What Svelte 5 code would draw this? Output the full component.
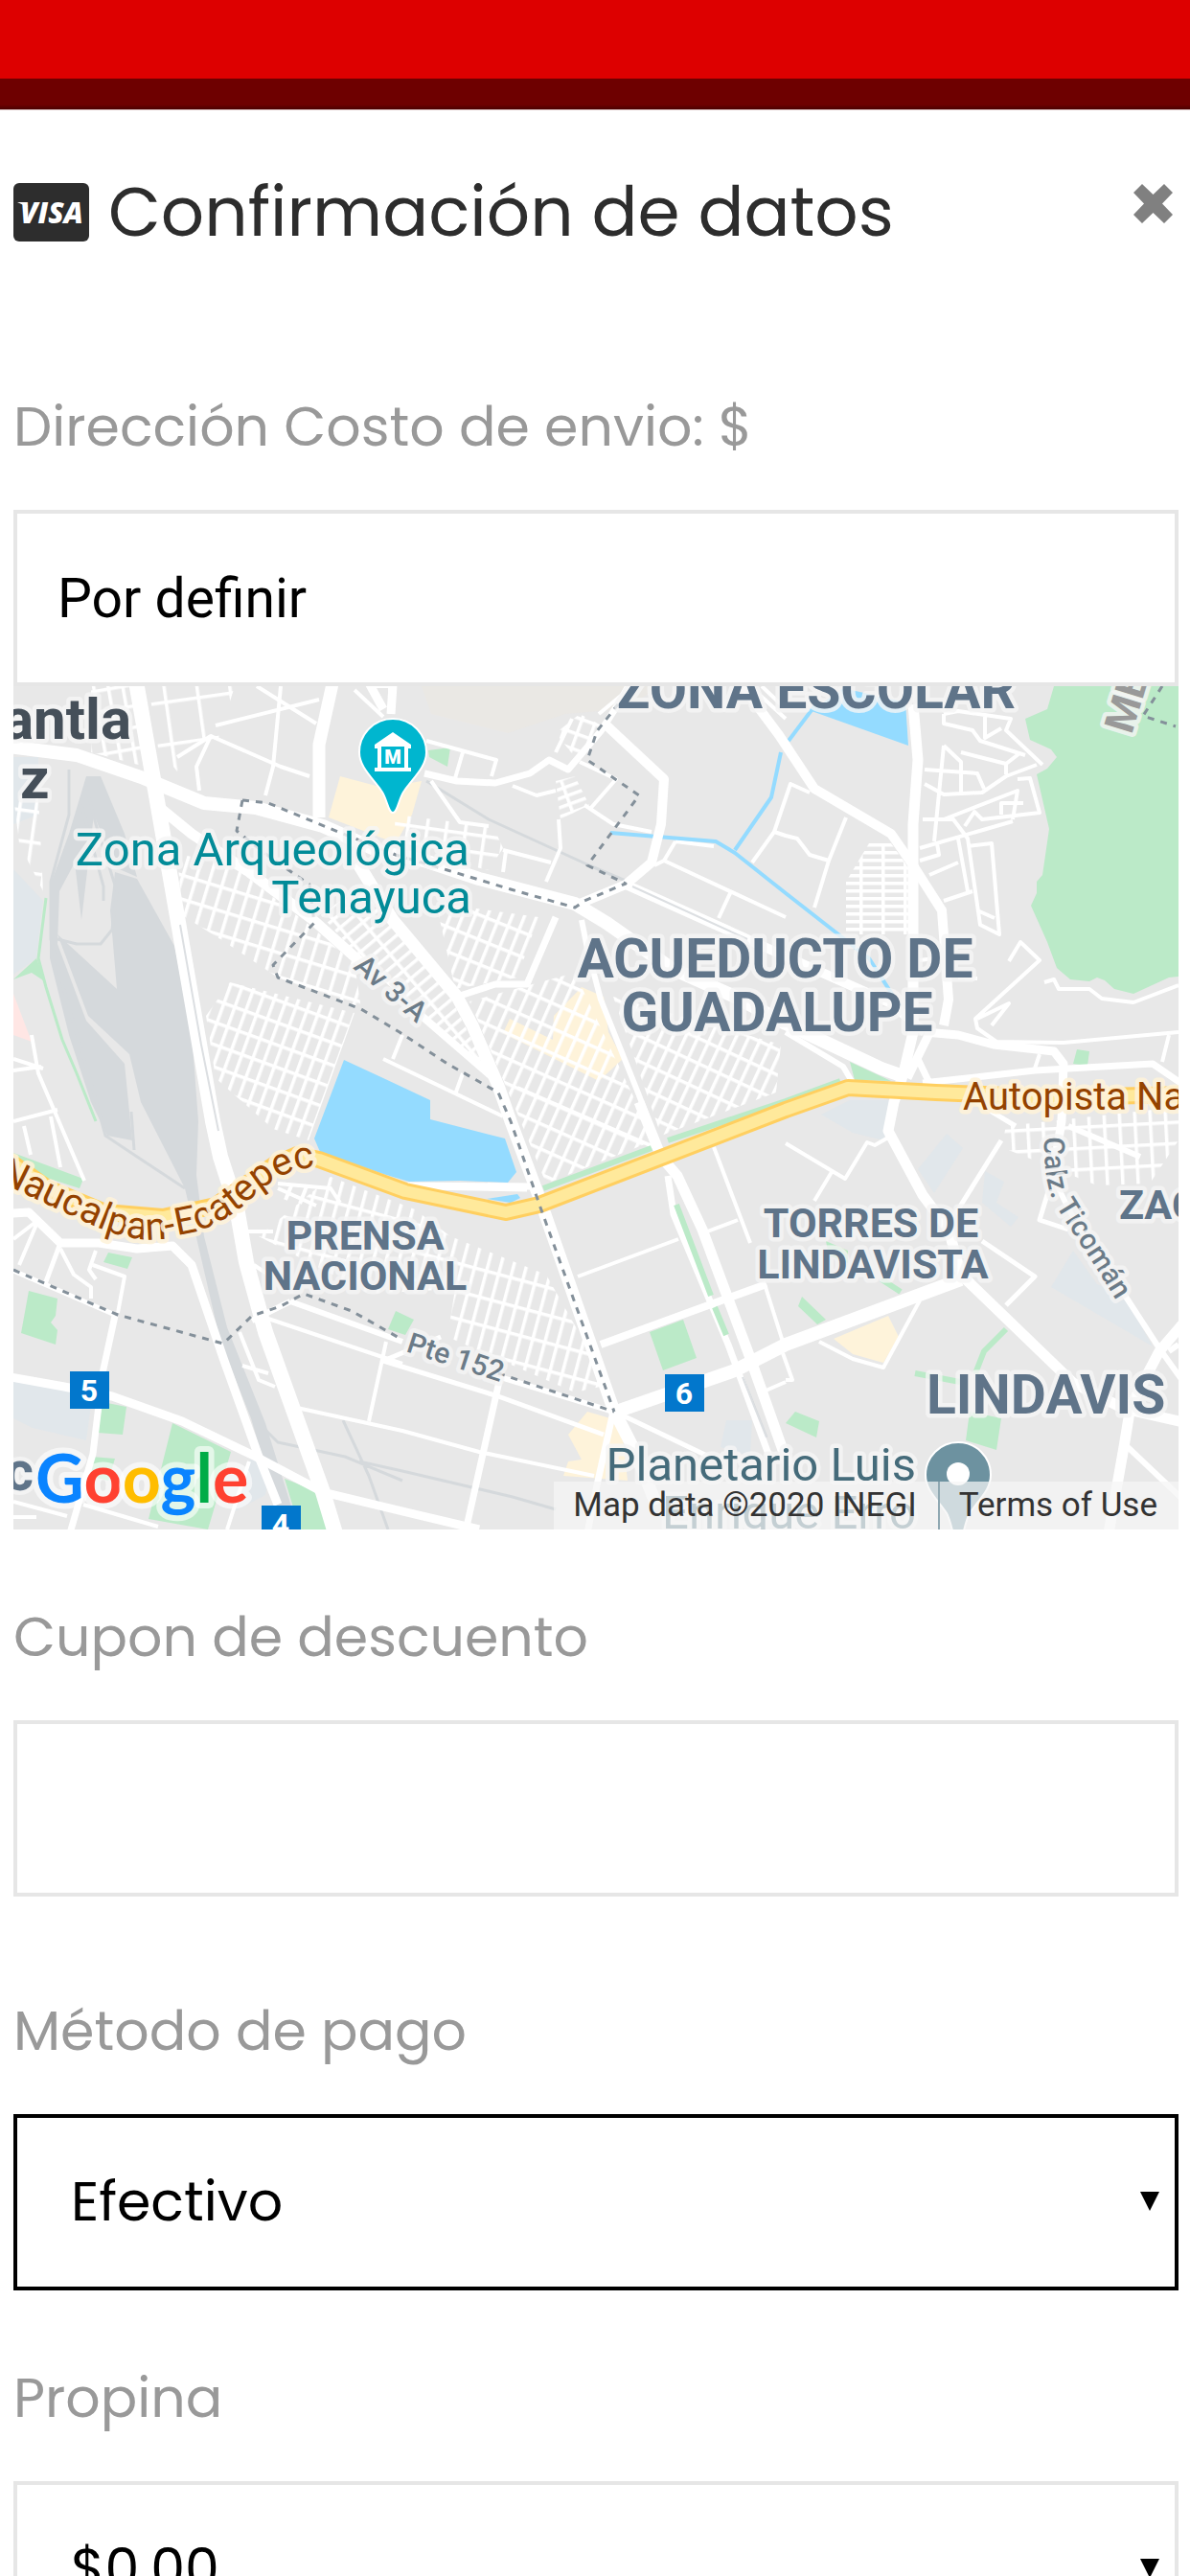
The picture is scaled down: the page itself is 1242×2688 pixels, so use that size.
<script lang="ts">
	let address = $state('Por definir');
	let coupon = $state('');
	let payment = $state('Efectivo');
	let tip = $state('$0.00');

	const payments = ['Efectivo', 'Tarjeta'];
	const tips = ['$0.00', '$10.00', '$20.00', '$50.00'];

	type Area = { fill: string; points: string };
	type Line = { w: number; points: string };

	const areas: Area[] = [
		// industrial
		{ fill: '#e1e7eb', points: '14,907 45,940 38,1000 14,1017' },
		{ fill: '#e1e7eb', points: '14,790 40,790 40,850 14,860' },
		{ fill: '#e1e7eb', points: '14,1440 97,1453 90,1503 34,1490 14,1480' },
		{ fill: '#e1e7eb', points: '857,1163 887,1148 937,1148 922,1190 890,1182' },
		{ fill: '#e1e7eb', points: '1120,1305 1145,1340 1173,1352 1203,1405 1097,1343' },
		{ fill: '#e1e7eb', points: '958,1220 988,1183 1005,1198 975,1245' },
		{ fill: '#e1e7eb', points: '1028,1222 1048,1233 1040,1255 1063,1270 1055,1280 1025,1255' },
		{ fill: '#e1e7eb', points: '758,1482 785,1482 783,1520 752,1510' },
		{ fill: '#e1e7eb', points: '262,1520 283,1530 277,1560 245,1577' },
		{ fill: '#ffe6e4', points: '14,1037 33,1087 14,1080' },
		// rail yards
		{ fill: '#d5d9dc', points: '120,910 143,917 182,987 200,1077 207,1170 205,1226 213,1290 237,1385 277,1485 305,1575 290,1575 262,1480 230,1400 207,1300 193,1240 147,1150 135,1100 92,1060 60,975 122,1032 115,950' },
		{ fill: '#d5d9dc', points: '52,925 72,870 90,810 105,810 130,870 143,915 120,905 98,850 85,960 78,900 62,930 60,985 90,1065 130,1110 138,1190 112,1185 95,1150 72,1080 52,1000' },
		// parks
		{ fill: '#bbeac8', points: '1100,716 1093,740 1070,750 1075,772 1097,782 1103,790 1093,802 1082,808 1095,865 1088,913 1082,920 1082,932 1076,945 1093,983 1103,1010 1117,1022 1137,1024 1145,1020 1153,1023 1163,1032 1183,1037 1220,1020 1230,1019 1230,716' },
		{ fill: '#bbeac8', points: '30,1347 60,1355 58,1373 53,1380 60,1388 58,1403 22,1391' },
		{ fill: '#bbeac8', points: '180,1485 241,1515 217,1596 155,1585' },
		{ fill: '#bbeac8', points: '297,1543 333,1557 342,1596 313,1596' },
		{ fill: '#bbeac8', points: '107,1463 132,1468 128,1497 102,1495' },
		{ fill: '#bbeac8', points: '95,1520 120,1522 113,1545 93,1540' },
		{ fill: '#bbeac8', points: '14,1203 87,1230 83,1240 14,1218' },
		{ fill: '#bbeac8', points: '113,1307 138,1312 133,1324 108,1317' },
		{ fill: '#bbeac8', points: '678,1390 713,1377 727,1417 692,1430' },
		{ fill: '#bbeac8', points: '413,1368 432,1377 423,1393 405,1387' },
		{ fill: '#bbeac8', points: '1012,1473 1045,1480 1040,1513 1008,1503' },
		{ fill: '#bbeac8', points: '837,1353 862,1377 853,1382 833,1363' },
		{ fill: '#bbeac8', points: '830,1473 855,1483 852,1500 820,1485' },
		{ fill: '#bbeac8', points: '862,1295 885,1305 885,1318 865,1310' },
		{ fill: '#bbeac8', points: '887,1108 930,1128 892,1127' },
		{ fill: '#bbeac8', points: '1120,1110 1124,1095 1137,1097 1135,1112' },
		{ fill: '#bbeac8', points: '447,783 470,780 467,800 448,790' },
		{ fill: '#bbeac8', points: '14,1022 38,1000 48,1025 33,1015' },
		// shopping areas
		{ fill: '#fef3da', points: '355,810 400,822 440,815 430,850 413,880 343,853' },
		{ fill: '#fef3da', points: '607,1030 630,1040 635,1077 650,1105 625,1128 525,1078 532,1063 577,1085 578,1060' },
		{ fill: '#fef3da', points: '870,1397 927,1373 938,1395 922,1422 890,1413' },
		{ fill: '#fef3da', points: '613,1473 637,1480 650,1500 655,1545 588,1540 593,1525 607,1523 593,1497' },
		// water
		{ fill: '#94dbff', points: '359,1106 400,1125 449,1148 449,1168 527,1188 539,1223 530,1234 480,1232 427,1233 400,1225 334,1202 328,1188' },
		{ fill: '#94dbff', points: '508,1251 540,1246 543,1250 533,1255' },
		{ fill: '#94dbff', points: '847,742 880,718 945,733 948,778' }
	];

	// blocks of small streets: angle and spacing of the grid inside each outline
	const blocks = [
		{ angle: -10, w: 15, h: 22, points: '95,716 137,716 152,800 95,785' },
		{ angle: -8, w: 34, h: 44, points: '155,716 245,716 228,770 200,775 185,805 165,780' },
		{ angle: 8, w: 17, h: 32, points: '14,830 40,830 45,930 20,880' },
		{ angle: 17, w: 14, h: 24, points: '185,890 247,907 320,963 370,1005 377,1053 290,1020 230,980 190,955' },
		{ angle: 20, w: 12, h: 22, points: '240,1025 370,1057 322,1190 285,1178 225,1125 215,1060' },
		{ angle: -40, w: 22, h: 11, points: '335,955 375,925 470,1040 510,1120 385,1010' },
		{ angle: 22, w: 12, h: 24, points: '455,942 562,957 540,1020 475,1032' },
		{ angle: 8, w: 20, h: 18, points: '413,850 515,863 525,885 510,908 410,885' },
		{ angle: 24, w: 13, h: 24, points: '490,1045 600,1015 640,1100 683,1190 570,1235 535,1150' },
		{ angle: 25, w: 12, h: 24, points: '640,1040 815,1090 810,1140 690,1185' },
		{ angle: 15, w: 13, h: 28, points: '345,1228 433,1262 470,1290 570,1330 635,1445 600,1453 467,1395 475,1345 385,1350 270,1290' },
		{ angle: 0, w: 23, h: 8, points: '883,920 907,880 930,880 950,908 950,975 883,975' },
		{ angle: -3, w: 16, h: 22, points: '1050,1175 1230,1155 1230,1190 1200,1235 1145,1237 1045,1197' },
		{ angle: 20, w: 14, h: 16, points: '580,765 605,745 628,757 600,790' },
		{ angle: -20, w: 30, h: 9, points: '580,815 600,810 615,840 585,855' }
	];

	const streets: Line[] = [
		{ w: 4, points: '14,1170 60,1158 M25,1175 32,1205 M53,1165 63,1218' },
		{ w: 4, points: '14,1105 45,1115 M14,1117 43,1113 M33,1080 40,1120 88,1232' },
		{ w: 4, points: '220,768 293,800 323,810 M293,716 285,800 277,830 M225,757 333,730' },
		{ w: 4, points: '185,790 220,768 205,800 208,825 M268,716 330,755' },
		{ w: 4, points: '390,716 407,716 407,745 M370,720 400,748' },
		{ w: 4, points: '445,773 518,793 513,810 M483,785 475,812 M450,815 480,858 510,862' },
		{ w: 4, points: '583,855 585,885 570,920 M535,820 560,830 580,825 M610,840 640,860 680,868' },
		{ w: 4, points: '605,795 643,813 615,845 M660,716 625,745 M580,785 597,750' },
		{ w: 4, points: '525,887 575,900 M528,888 525,910' },
		{ w: 4, points: '683,903 693,898 820,957 M705,878 745,883 M705,878 693,898 M763,930 750,958' },
		{ w: 4, points: '785,900 808,868 820,872 832,875 845,892 865,898 M883,853 865,898 850,947 M808,868 825,818 845,827' },
		{ w: 4, points: '783,716 820,750 M795,716 815,735' },
		{ w: 4, points: '985,778 975,878 M985,778 1003,795 1003,828 M965,803 1020,807 1027,823 M965,818 985,829 1025,827 1050,810 1082,798' },
		{ w: 4, points: '985,745 1000,742 1055,750 1050,762 1088,798 M985,745 985,755 1015,762 1023,773 1070,788 M1028,745 1028,770 1045,760' },
		{ w: 4, points: '1003,785 1050,797 1050,808 M1050,797 1063,787 M985,855 1062,825 1057,855 M1062,813 1075,812 1085,848 1025,855 1017,847 1007,862 M1045,850 1045,838 1068,838' },
		{ w: 4, points: '963,855 995,855 1010,875 1023,965 1043,975 1035,880 1010,883 M960,885 1057,857 M960,898 980,892 978,880 M1000,875 1010,930 M970,913 1000,900 M985,940 1015,930 M1020,950 1038,958' },
		{ w: 4, points: '1053,1003 1065,983 1085,1002 1018,1063 1020,1073 1040,1087 1110,1088 1230,1077 M1020,1063 1053,1047 1035,1070' },
		{ w: 4, points: '1090,1025 1100,1022 1105,1032 1137,1032 1150,1042 1183,1046 1230,1028' },
		{ w: 4, points: '960,1002 975,1000 M1000,1020 1020,1021 M1085,1100 1080,1115 M1220,1080 1213,1108' },
		{ w: 4, points: '14,1293 40,1273 20,1320 M63,1303 77,1330 95,1343 95,1355 M100,1305 93,1325 100,1335 M97,1320 130,1332 123,1370' },
		{ w: 4, points: '247,1265 245,1275 M265,1320 280,1330 M250,1285 285,1285' },
		{ w: 4, points: '250,1390 270,1440 287,1447 M253,1425 280,1433 M277,1375 420,1423 M403,1400 385,1483 M310,1469 420,1493 500,1515 620,1540' },
		{ w: 5, points: '460,1395 400,1420 520,1457 630,1497 M650,1477 740,1520' },
		{ w: 4, points: '290,1240 330,1258 M290,1235 345,1240 355,1255 M305,1235 298,1252 M320,1238 313,1256' },
		{ w: 4, points: '603,1332 708,1293 M733,1287 770,1273 M745,1197 783,1297 M820,1193 882,1230 905,1192 913,1195 927,1187 M868,1223 850,1253' },
		{ w: 4, points: '820,1440 827,1440 817,1412 M855,1400 890,1418 922,1427 960,1357 M798,1340 817,1400 M797,1452 820,1442' },
		{ w: 5, points: '995,1270 1045,1190 M1010,1145 1060,1175 M1095,1240 1085,1273 1115,1283 M1025,1295 1080,1332 1050,1362' },
		{ w: 4, points: '14,1567 70,1582 M87,1570 165,1593 M260,1525 237,1596 M14,1583 38,1583' },
		{ w: 4, points: '400,1105 525,1165 M483,1120 475,1142 M420,1080 410,1105 M540,1135 690,1200' },
		{ w: 6, points: '1115,1175 1190,1207 M1230,1403 1220,1410' },
		{ w: 7, points: '440,1238 550,1240 M425,1237 558,1238' }
	];

	const roads: Line[] = [
		{ w: 14, points: '0,778 80,788 150,812 213,838 267,843 337,862 400,890 443,898 500,917 600,943 633,963 700,1010 767,1040 820,1068 920,1115 940,1122' },
		{ w: 16, points: '140,700 163,830 200,1043 222,1170 230,1207 247,1260 257,1317 277,1390 337,1557 350,1600' },
		{ w: 13, points: '350,700 333,777 333,853' },
		{ w: 9, points: '378,700 400,740 M411,700 408,745' },
		{ w: 11, points: '167,843 200,870 260,910 327,960 383,1010' },
		{ w: 8, points: '440,1060 513,1123' },
		{ w: 13, points: '373,900 410,960 477,1040 493,1070 520,1133 533,1170 563,1250 640,1470 663,1515 685,1570' },
		{ w: 10, points: '633,757 693,813 690,860 680,900 653,923 600,945' },
		{ w: 10, points: '653,923 820,998 930,1047 965,1077' },
		{ w: 10, points: '775,716 813,767 850,823 930,870 953,903 983,950 990,1043 985,1070' },
		{ w: 11, points: '953,735 958,793 953,860 953,1077 943,1120 933,1150 927,1180 963,1247 990,1283 1003,1330 1120,1443 1173,1470 1240,1485' },
		{ w: 9, points: '965,1077 1000,1080 1037,1090 1100,1097 1110,1110 1108,1170 1097,1237 M970,1078 947,1125' },
		{ w: 7, points: '963,1130 1027,1123 1080,1117 1203,1110 1235,1132 M958,1105 970,1130' },
		{ w: 6, points: '1103,1237 1120,1270 1173,1350 1210,1407 1235,1442' },
		{ w: 11, points: '1240,1375 1210,1410 1180,1467 1173,1510 1157,1600' },
		{ w: 6, points: '1177,1510 1235,1565' },
		{ w: 14, points: '643,1473 767,1430 820,1403 1003,1335' },
		{ w: 8, points: '627,1403 753,1357 800,1340' },
		{ w: 11, points: '667,1150 690,1207 707,1227 733,1283 783,1417 823,1530' },
		{ w: 7, points: '697,1227 703,1267 760,1403 803,1520' },
		{ w: 6, points: '607,960 613,990 627,1043 667,1143 677,1170' },
		{ w: 7, points: '580,957 550,1027 517,1027 477,1040' },
		{ w: 7, points: '443,807 477,815 517,817 553,807 573,793 593,803 627,763 645,735 665,700' },
		{ w: 9, points: '0,1267 30,1265 63,1297 103,1297 143,1303 180,1300 200,1320 233,1417 270,1520 290,1570' },
		{ w: 9, points: '0,1435 67,1447 117,1457 190,1483 267,1520 337,1557 420,1577 500,1596' },
		{ w: 7, points: '120,1373 107,1433 97,1517 73,1600' },
		{ w: 5, points: '0,1320 120,1372 M63,1297 47,1340' },
		{ w: 6, points: '303,1358 420,1400 M522,1437 640,1473' },
		{ w: 7, points: '522,1437 487,1593 M640,1473 623,1550 613,1600' },
		{ w: 6, points: '820,1077 880,1113 890,1130 M263,1378 303,1358' }
	];

	const borders = [
		'253,835 280,838 353,868 413,892 467,908 533,928 600,947 610,940 653,922 613,903 667,830 613,793 623,763 645,735',
		'253,835 247,867 280,893 323,923 328,963 285,1007 290,1020 377,1053 417,1077 467,1110 520,1140 533,1170 563,1257 641,1473',
		'14,1325 123,1372 233,1402 263,1373 293,1363 317,1350 367,1368 420,1398',
		'520,1433 641,1473',
		'1213,716 1193,747 1227,758'
	];

	const rails = '72,803 72,850 53,920 53,980 66,1030 95,1130 110,1185 140,1205 193,1240 M60,980 80,985 105,985 117,970 122,930 100,860 90,820 M108,940 108,925 85,840 M137,1160 140,1200 M270,1485 290,1505 360,1520 420,1545 M358,1482 385,1540 405,1596 M375,1525 420,1535 535,1562 580,1575 M445,815 510,855 615,903 660,922 700,945 780,980 M775,1437 800,1500';

	const highway = 'M0,1205 50,1240 110,1265 170,1270 225,1258 287,1215 310,1205 333,1210 423,1243 528,1265 563,1257 820,1158 885,1135 977,1140 1100,1145 1242,1142';

	const shields = [
		{ n: '5', x: 73, y: 1431 },
		{ n: '6', x: 694, y: 1434 },
		{ n: '4', x: 273, y: 1571 }
	];

	const districts = [
		{ text: 'ZONA ESCOLAR', x: 852, y: 739, big: true },
		{ text: 'ACUEDUCTO DE', x: 809, y: 1020, big: true },
		{ text: 'GUADALUPE', x: 811, y: 1076, big: true },
		{ text: 'PRENSA', x: 381, y: 1304, big: false },
		{ text: 'NACIONAL', x: 381, y: 1346, big: false },
		{ text: 'TORRES DE', x: 909, y: 1291, big: false },
		{ text: 'LINDAVISTA', x: 911, y: 1334, big: false }
	];
</script>

{#snippet arrow()}
	<svg class="arrow" viewBox="0 0 20 20" aria-hidden="true">
		<path d="M0 0h20L10 20z" />
	</svg>
{/snippet}

<div class="page">
	<div class="navbar"></div>
	<div class="navbar-shade"></div>

	<main class="modal">
		<header class="modal-header">
			<svg class="visa" viewBox="0 0 79 61" aria-hidden="true">
				<rect width="79" height="61" rx="6" fill="#2d2d2d" />
				<path d="M4 20h9l2 5z" fill="#fff" />
				<text x="40" y="42" text-anchor="middle">VISA</text>
			</svg>
			<h1>Confirmación de datos</h1>
			<button type="button" class="close" aria-label="Cerrar">
				<svg viewBox="0 0 41 41" aria-hidden="true">
					<path d="M9 0 20.500 11 32 0 41 9 30 20.500 41 32 32 41 20.500 30 9 41 0 32 11 20.500 0 9z" fill="#808080" />
				</svg>
			</button>
		</header>

		<div class="field">
			<label for="address">Dirección Costo de envio: $</label>
			<input id="address" type="text" bind:value={address} />
			<div class="map">
				<svg viewBox="14 716 1216 880" preserveAspectRatio="xMidYMid slice" role="img" aria-label="Mapa">
					<defs>
						{#each blocks as b, i}
							<pattern id="streets-{i}" width={b.w} height={b.h} patternUnits="userSpaceOnUse" patternTransform="rotate({b.angle})">
								<path d="M0 0H{b.w}M0 0V{b.h}" stroke="#fff" stroke-width="7" />
							</pattern>
						{/each}
						<path id="naucalpan" d="M-4 1231Q50 1258 100 1280T190 1288Q230 1282 265 1248T345 1218" />
						<path id="ticoman" d="M1090 1186Q1089 1225 1097 1248C1104 1265 1140 1315 1168 1362" />
					</defs>

					<rect x="14" y="716" width="1216" height="880" fill="#e8e8e8" />
					<path d="M440 716H690L650 740 590 745 530 765 450 745z" fill="#eae8e4" />
					{#each areas as a}
						<polygon points={a.points} fill={a.fill} />
					{/each}
					<path class="line" d="M{rails}" stroke="#d5d9dc" stroke-width="3" />
					<path class="line" d="M48 937 40 1000 48 1030 65 1085 80 1120 100 1170" stroke="#bbeac8" stroke-width="3" />
					<path class="line" d="M1050 1387 1027 1410 1018 1433M955 1433 1002 1442M920 1335 940 1348" stroke="#bbeac8" stroke-width="6" />
					{#each blocks as b, i}
						<polygon points={b.points} fill="url(#streets-{i})" />
					{/each}
					{#each streets as s}
						<path class="line" d="M{s.points}" stroke="#fff" stroke-width={s.w} />
					{/each}
					<path class="line" d="M637 869 747 878 767 890 820 932 907 1000 950 1067M767 887 805 832 815 785M823 773 850 737" stroke="#94dbff" stroke-width="4" />
					{#each roads as r}
						<path class="line" d="M{r.points}" stroke="#fff" stroke-width={r.w} />
					{/each}
					<path class="line" d="M706 1257 742 1352M746 1364 758 1393M567 1240 680 1198M697 1190 820 1149 877 1128" stroke="#bbeac8" stroke-width="6" />
					<path class="line" d="M188 965 210 1090 228 1180M660 925 780 980M775 1437 800 1500" stroke="#dcdfe2" stroke-width="2" />
					<path class="line" d={highway} stroke="#ffcf60" stroke-width="18" />
					<path class="line" d={highway} stroke="#ffe99b" stroke-width="12" />
					{#each borders as line}
						<path class="line" d="M{line}" stroke="#84909a" stroke-width="3" stroke-dasharray="7 7" />
					{/each}

					<g class="town">
						<text x="137" y="771" text-anchor="end">antla</text>
						<text x="21" y="833">z</text>
					</g>
					{#each districts as d}
						<text class={d.big ? 'district big' : 'district'} x={d.x} y={d.y} text-anchor="middle">{d.text}</text>
					{/each}
					<text class="district" x="1168" y="1272">ZAC</text>
					<text class="district big" x="967" y="1475">LINDAVIS</text>
					<g class="place" fill="#028b98" text-anchor="end">
						<text x="490" y="903">Zona Arqueológica</text>
						<text x="492" y="953">Tenayuca</text>
					</g>
					<g class="place" fill="#456b7a" text-anchor="end">
						<text x="956" y="1545">Planetario Luis</text>
						<text x="956" y="1595">Enrique Erro</text>
					</g>
					<g class="street">
						<text transform="translate(368 1010) rotate(41)">Av 3-A</text>
						<text transform="translate(423 1410) rotate(18)">Pte 152</text>
						<text><textPath href="#ticoman">Calz. Ticomán</textPath></text>
					</g>
					<text class="mexico" transform="translate(1181 767) rotate(-73)">ME</text>
					<g class="highway">
						<text x="1005" y="1158">Autopista Na</text>
						<text><textPath href="#naucalpan">Naucalpan-Ecatepec</textPath></text>
					</g>

					{#each shields as s}
						<rect x={s.x} y={s.y} width="41" height="39" fill="#0277cc" />
						<text class="shield" x={s.x + 20} y={s.y + 31} text-anchor="middle">{s.n}</text>
					{/each}

					<path d="M410 848C405 848 404 833 398 825 388 811 375 800 375 785A35 35 0 0 1 445 785C445 800 432 811 422 825 416 833 415 848 410 848z" fill="#00b6cf" stroke="#fff" stroke-width="2" />
					<path d="M410 764 429 777V781H426V801H429V805H391V801H394V781H391V777z" fill="#fff" />
					<rect x="398" y="779" width="24" height="22" fill="#00b6cf" />
					<text class="museum" x="410" y="797" text-anchor="middle">M</text>
					<path d="M1000 1610C995 1610 994 1590 988 1579 978 1564 966 1555 966 1539A34 34 0 0 1 1034 1539C1034 1555 1022 1564 1012 1579 1006 1590 1005 1610 1000 1610z" fill="#6d92a0" stroke="#fff" stroke-width="2" />
					<circle cx="1000" cy="1538" r="12" fill="#fff" />

					<text class="google" x="37" y="1568"><tspan fill="#0a84ff">G</tspan><tspan fill="#ff4131">o</tspan><tspan fill="#ffbd00">o</tspan><tspan fill="#0a84ff">g</tspan><tspan fill="#00ac47">l</tspan><tspan fill="#ff4131">e</tspan></text>
					<text class="district big" x="35" y="1555" text-anchor="end">c</text>
				</svg>
				<div class="attribution">
					<span>Map data ©2020 INEGI</span>
					<a href="#terms">Terms of Use</a>
				</div>
			</div>
		</div>

		<div class="field">
			<label for="coupon">Cupon de descuento</label>
			<input id="coupon" type="text" bind:value={coupon} />
		</div>

		<div class="field spaced">
			<label for="payment">Método de pago</label>
			<div class="select">
				<select id="payment" class="active" bind:value={payment}>
					{#each payments as p}
						<option>{p}</option>
					{/each}
				</select>
				{@render arrow()}
			</div>
		</div>

		<div class="field">
			<label for="tip">Propina</label>
			<div class="select">
				<select id="tip" bind:value={tip}>
					{#each tips as t}
						<option>{t}</option>
					{/each}
				</select>
				{@render arrow()}
			</div>
		</div>
	</main>
</div>

<style>
	:global(body) {
		margin: 0;
		background: #fff;
	}

	.page {
		height: 100vh;
		overflow: hidden;
		font-family: Poppins, Inter, sans-serif;
	}

	.navbar {
		height: 82px;
		background: #dd0000;
	}

	.navbar-shade {
		height: 32px;
		background: linear-gradient(#6e0000 85%, #4a0000);
		border-bottom: 1px solid #c9a9a9;
	}

	.modal {
		padding: 0 12px 0 14px;
		background: #fff;
	}

	.modal-header {
		display: flex;
		align-items: center;
		padding: 52px 6px 58px 0;
	}

	.visa {
		width: 79px;
		height: 61px;
		margin-right: 20px;
		flex-shrink: 0;
	}

	.visa text {
		font: italic 800 30px 'Open Sans', sans-serif;
		fill: #fff;
	}

	h1 {
		flex: 1;
		margin: 0;
		font-size: 71px;
		font-weight: 400;
		line-height: 108px;
		color: #2d2d2d;
	}

	.close {
		align-self: flex-start;
		margin-top: 25px;
		padding: 0;
		border: none;
		background: none;
		cursor: pointer;
	}

	.close svg {
		display: block;
		width: 41px;
		height: 41px;
	}

	.field {
		padding-top: 70px;
	}

	.field.spaced {
		padding-top: 98px;
	}

	label {
		display: block;
		margin-bottom: 45px;
		font-size: 57px;
		line-height: 84px;
		color: #999;
	}

	input,
	select {
		display: block;
		box-sizing: border-box;
		width: 100%;
		height: 184px;
		border: 4px solid #e6e6e6;
		border-radius: 0;
		background: #fff;
		color: #000;
		outline: none;
	}

	input {
		padding: 0 42px;
		font: 57px Roboto, sans-serif;
	}

	select {
		appearance: none;
		padding: 0 56px 2px;
		font: 57px Poppins, Inter, sans-serif;
	}

	select.active {
		border-color: #000;
	}

	.select {
		position: relative;
	}

	.arrow {
		position: absolute;
		top: 81px;
		right: 20px;
		width: 20px;
		height: 20px;
		pointer-events: none;
	}

	.map {
		position: relative;
		height: 880px;
		overflow: hidden;
	}

	.map > svg {
		display: block;
		width: 100%;
		height: 100%;
		font-family: Roboto, sans-serif;
	}

	.line {
		fill: none;
		stroke-linejoin: round;
	}

	.map text {
		paint-order: stroke;
		stroke: rgba(245, 245, 245, 0.8);
		stroke-width: 9px;
		stroke-linejoin: round;
	}

	.town {
		font-size: 60px;
		font-weight: 700;
		fill: #454f59;
	}

	.district {
		font-size: 43px;
		font-weight: 700;
		fill: #5f7489;
	}

	.district.big {
		font-size: 57px;
	}

	.place {
		font-size: 49px;
		font-weight: 400;
	}

	.street {
		font-size: 30px;
		font-weight: 500;
		fill: #6b7b88;
	}

	.mexico {
		font-size: 43px;
		font-weight: 700;
		fill: #999;
	}

	.highway {
		font-size: 40px;
		fill: #944200;
	}

	.map .highway text {
		stroke: rgba(254, 243, 218, 0.9);
	}

	.map .shield {
		font-size: 32px;
		font-weight: 700;
		fill: #fff;
		stroke: none;
	}

	.map .museum {
		font-size: 20px;
		font-weight: 900;
		fill: #fff;
		stroke: none;
	}

	.map .google {
		font: 700 70px Lato, sans-serif;
		stroke: rgba(255, 255, 255, 0.6);
		stroke-width: 12px;
	}

	.attribution {
		position: absolute;
		right: 0;
		bottom: 0;
		display: flex;
		height: 50px;
		background: rgba(245, 245, 245, 0.72);
		font: 35px/50px Roboto, sans-serif;
		color: #333;
	}

	.attribution span {
		padding: 0 22px 0 20px;
		border-right: 2px solid #8fa8b2;
	}

	.attribution a {
		padding: 0 22px 0 20px;
		color: inherit;
		text-decoration: none;
	}
</style>
